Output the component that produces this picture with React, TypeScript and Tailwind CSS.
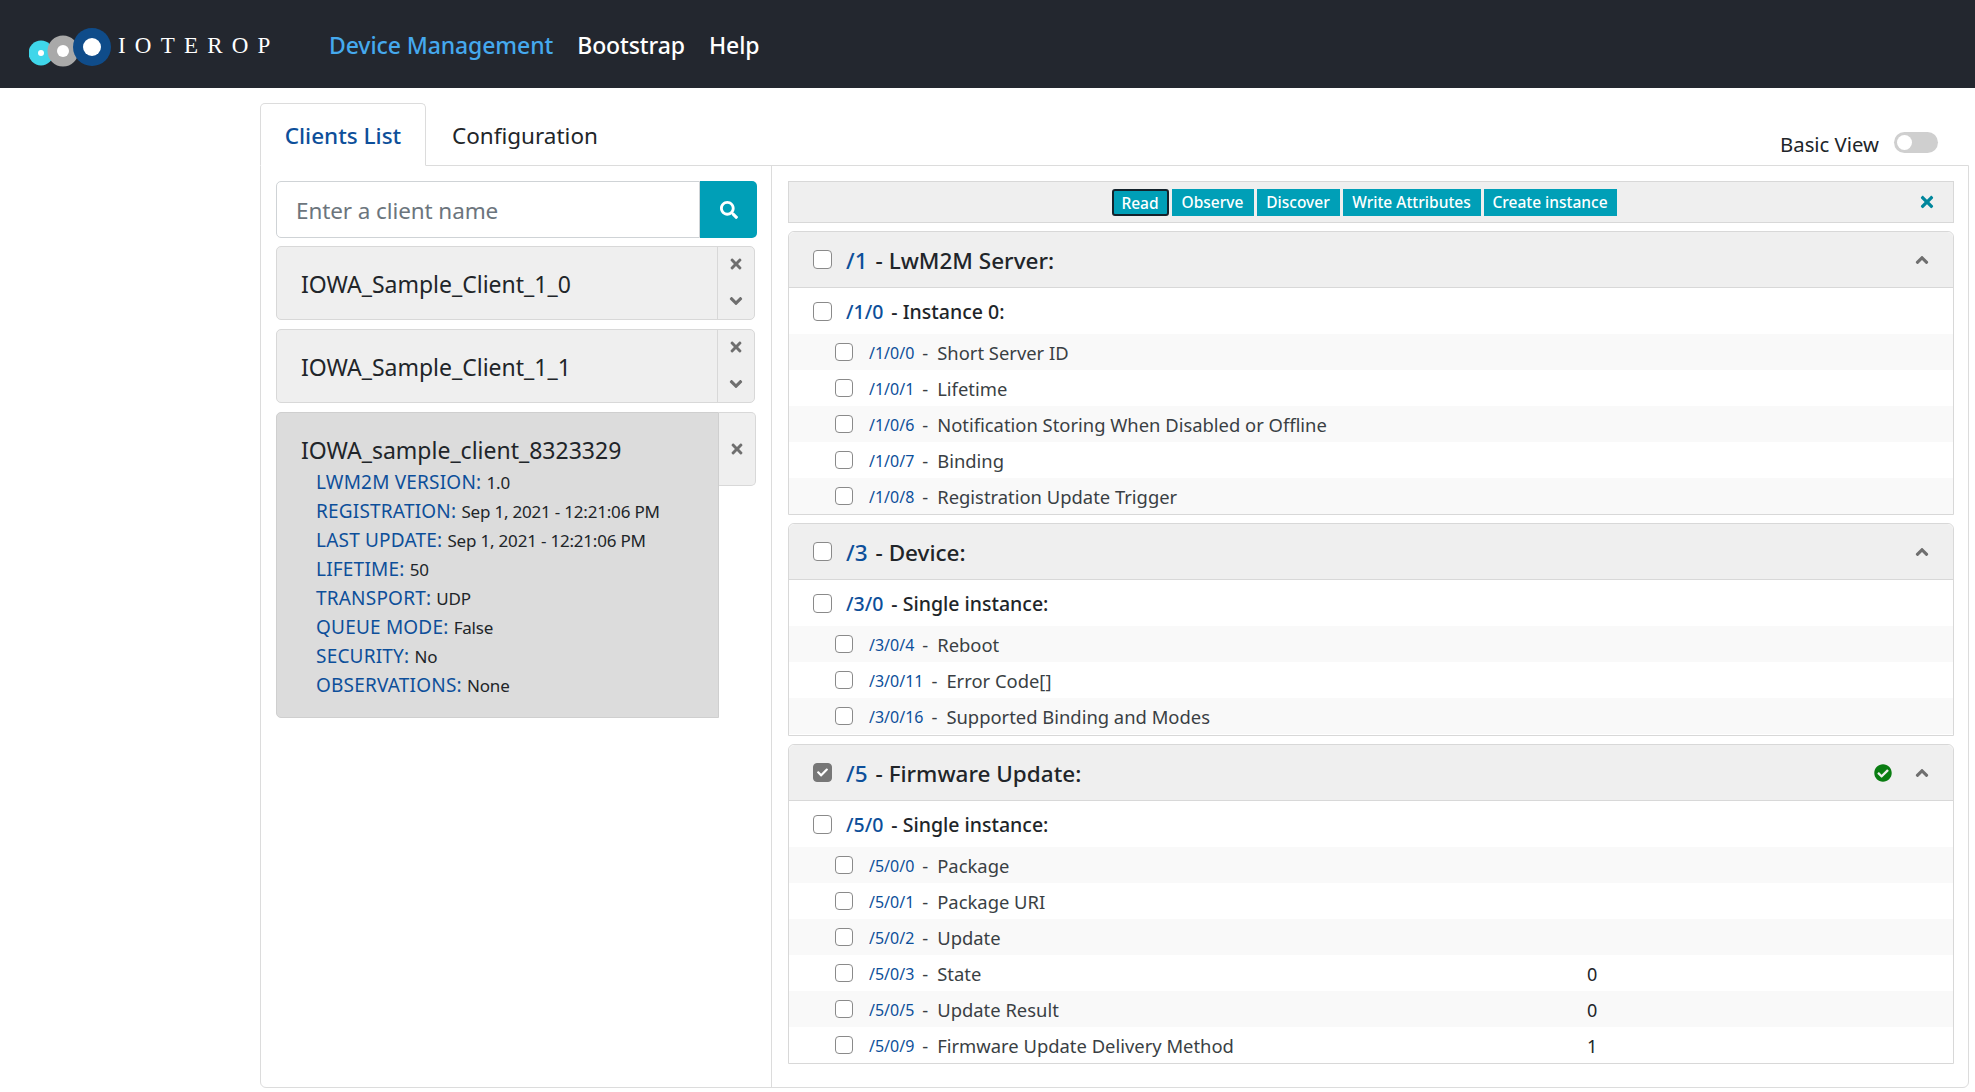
import { FaAngleDown, FaAngleUp, FaCheck, FaCheckCircle, FaSearch, FaTimes } from "react-icons/fa";

type Resource = {
  path: string;
  name: string;
  value?: string;
};

type ObjectPanelProps = {
  path: string;
  name: string;
  instancePath: string;
  instanceName: string;
  resources: Resource[];
  checked?: boolean;
  className?: string;
};

const FONT = { fontFamily: '"Noto Sans", sans-serif' };

const details = [
  ["LWM2M VERSION:", "1.0"],
  ["REGISTRATION:", "Sep 1, 2021 - 12:21:06 PM"],
  ["LAST UPDATE:", "Sep 1, 2021 - 12:21:06 PM"],
  ["LIFETIME:", "50"],
  ["TRANSPORT:", "UDP"],
  ["QUEUE MODE:", "False"],
  ["SECURITY:", "No"],
  ["OBSERVATIONS:", "None"],
];

const actions = [
  { label: "Observe", width: "w-[82px]" },
  { label: "Discover", width: "w-[83px]" },
  { label: "Write Attributes", width: "w-[138px]" },
  { label: "Create instance", width: "w-[133px]" },
];

function Checkbox({ large, checked }: { large?: boolean; checked?: boolean }): JSX.Element {
  return (
    <span
      className={`flex shrink-0 items-center justify-center rounded-[4px] border-[1.5px] ${
        large ? "h-[19px] w-[19px]" : "h-[18px] w-[18px]"
      } ${checked ? "border-[#777777] bg-[#777777]" : "border-[#8a8a8a] bg-white"}`}
    >
      {checked && <FaCheck className="text-[11px] text-white" />}
    </span>
  );
}

function Logo(): JSX.Element {
  return (
    <svg width="90" height="50" viewBox="0 0 90 50" className="mt-[8px] shrink-0">
      <circle cx="12" cy="30" r="12.5" fill="#3fd6ea" />
      <circle cx="12" cy="30" r="3" fill="#ffffff" />
      <circle cx="34" cy="28" r="15.5" fill="#a9a9a9" />
      <circle cx="34" cy="28" r="6" fill="#ffffff" />
      <circle cx="63" cy="24" r="19" fill="#0f4c8a" />
      <circle cx="63" cy="24" r="9" fill="#ffffff" />
    </svg>
  );
}

function ClientCard({ name }: { name: string }): JSX.Element {
  return (
    <div className="flex h-[74px] w-[479px] overflow-hidden rounded-[5px] border border-[#d8d8d8] bg-[#efefef]">
      <div className="flex flex-1 items-center pl-[24px] pt-[2px] text-[23px] text-[#212529]">{name}</div>
      <div className="flex w-[37px] flex-col items-center justify-between border-l border-[#d8d8d8] pt-[9px] pb-[8px] text-[#6f6f6f]">
        <FaTimes className="text-[16px]" />
        <FaAngleDown className="text-[20px]" />
      </div>
    </div>
  );
}

function ObjectPanel({ path, name, instancePath, instanceName, resources, checked, className }: ObjectPanelProps): JSX.Element {
  return (
    <section className={`w-[1166px] rounded-t-[6px] border border-[#d8d8d8] ${className ?? ""}`}>
      <div className="flex h-[56px] items-center rounded-t-[6px] border-b border-[#d8d8d8] bg-[#efefef] pl-[24px] text-[22.5px] font-medium">
        <Checkbox large checked={checked} />
        <span className="ml-[14px] pt-[2px] text-[#0d4f9a]">{path}</span>
        <span className="ml-[8px] pt-[2px] text-[#212529]">- {name}:</span>
        <span className="ml-auto flex items-center text-[#6f6f6f]">
          {checked && <FaCheckCircle className="mr-[20px] text-[18px] text-[#0a7d12]" />}
          <FaAngleUp className="mr-[21px] text-[20px]" />
        </span>
      </div>
      <div className="flex h-[46px] items-center pl-[24px] text-[19.5px] font-medium">
        <Checkbox large />
        <span className="ml-[14px] pt-[2px] text-[#0d4f9a]">{instancePath}</span>
        <span className="ml-[8px] pt-[2px] text-[#212529]">- {instanceName}:</span>
      </div>
      {resources.map((r, i) => (
        <div
          key={r.path}
          className={`flex h-[36px] items-center pl-[46px] ${i % 2 === 0 ? "bg-[#f9f9f9]" : "bg-white"}`}
        >
          <Checkbox />
          <span className="ml-[16px] pt-[2px] text-[16px] text-[#0d4f9a]">{r.path}</span>
          <span className="ml-[8px] pt-[2px] text-[18.4px] text-[#3a3f44]">-</span>
          <span className="ml-[9px] pt-[2px] text-[18.4px] text-[#3a3f44]">{r.name}</span>
          {r.value && (
            <span className="absolute left-[1587px] pt-[2px] text-[18px] text-[#212529]">{r.value}</span>
          )}
        </div>
      ))}
    </section>
  );
}

export default function App(): JSX.Element {
  return (
    <div className="h-[1092px] w-[1975px] overflow-hidden bg-white" style={FONT}>
      <nav className="flex h-[88px] items-center bg-[#23272f] pl-[29px]">
        <Logo />
        <span
          className="ml-[-1px] w-[211px] pt-[5px] text-[23px] tracking-[0.4em] text-white"
          style={{ fontFamily: '"Liberation Serif", serif' }}
        >
          IOTEROP
        </span>
        <div className="flex items-center pt-[2px] text-[23px] font-medium tracking-[-0.1px] text-white">
          <span className="text-[#45a9ee]">Device Management</span>
          <span className="ml-[24px]">Bootstrap</span>
          <span className="ml-[24px]">Help</span>
        </div>
      </nav>

      <main className="ml-[260px] mt-[14px] w-[1709px]">
        <div className="relative flex h-[63px] items-end">
          <div className="relative top-px flex h-[63px] w-[166px] items-center justify-center rounded-t-[5px] border border-b-white border-[#dcdcdc] bg-white pt-[2px] text-[22.5px] font-medium text-[#0d4f9a]">
            Clients List
          </div>
          <div className="flex h-[62px] items-center pl-[26px] pt-[4px] text-[22.5px] text-[#212529]">Configuration</div>
          <div className="mb-[6px] ml-auto flex items-center pr-[31px]">
            <span className="pt-[2px] text-[20.3px] text-[#212529]">Basic View</span>
            <span className="ml-[15px] flex h-[21px] w-[44px] items-center rounded-full bg-[#cfcfcf] pl-[3px]">
              <span className="h-[15px] w-[15px] rounded-full bg-white" />
            </span>
          </div>
        </div>

        <div className="flex h-[923px] rounded-b-[6px] border border-[#dcdcdc]">
          <div className="w-[511px] border-r border-[#dcdcdc] pl-[15px] pt-[15px]">
            <div className="flex h-[57px] w-[481px]">
              <div className="flex flex-1 items-center rounded-l-[5px] border border-[#cfd3d6] pl-[19px] pt-[3px] text-[22.5px] tracking-[-0.1px] text-[#6c757d]">
                Enter a client name
              </div>
              <button type="button" className="flex w-[57px] items-center justify-center rounded-r-[5px] bg-[#009fb7] text-[18px] text-white">
                <FaSearch />
              </button>
            </div>

            <div className="mt-[8px] flex flex-col gap-[9px]">
              <ClientCard name="IOWA_Sample_Client_1_0" />
              <ClientCard name="IOWA_Sample_Client_1_1" />
              <div className="flex w-[480px] items-start">
                <div className="h-[306px] w-[443px] rounded-l-[5px] border border-[#cfcfcf] bg-[#dcdcdc] pl-[24px] pt-[20px]">
                  <div className="text-[23px] leading-[35px] text-[#212529]">IOWA_sample_client_8323329</div>
                  {details.map(([label, value]) => (
                    <div key={label} className="ml-[15px] h-[29px] text-[19px] leading-[29px] tracking-[0.2px]">
                      <span className="text-[#0d4f9a]">{label}</span>{" "}
                      <span className="text-[17px] tracking-[-0.2px] text-[#212529]">{value}</span>
                    </div>
                  ))}
                </div>
                <div className="flex h-[74px] flex-1 items-center justify-center rounded-r-[5px] border border-l-0 border-[#d8d8d8] bg-[#efefef] text-[#6f6f6f]">
                  <FaTimes className="text-[16px]" />
                </div>
              </div>
            </div>
          </div>

          <div className="flex flex-col gap-[8px] pl-[16px] pt-[15px]">
            <div className="relative flex h-[42px] w-[1166px] items-center justify-center border border-[#d8d8d8] bg-[#efefef] pr-[14px]">
              <div className="flex items-center gap-[3px] text-[15.5px] font-medium text-white">
                <button type="button" className="h-[27px] w-[57px] rounded-[3px] border-2 border-[#14222b] bg-[#009fb7] pt-[1px]">Read</button>
                {actions.map((a) => (
                  <button key={a.label} type="button" className={`h-[27px] bg-[#009fb7] pt-[1px] ${a.width}`}>{a.label}</button>
                ))}
              </div>
              <FaTimes className="absolute right-[17px] text-[18px] text-[#00869c]" />
            </div>

            <ObjectPanel
              path="/1"
              name="LwM2M Server"
              instancePath="/1/0"
              instanceName="Instance 0"
              resources={[
                { path: "/1/0/0", name: "Short Server ID" },
                { path: "/1/0/1", name: "Lifetime" },
                { path: "/1/0/6", name: "Notification Storing When Disabled or Offline" },
                { path: "/1/0/7", name: "Binding" },
                { path: "/1/0/8", name: "Registration Update Trigger" },
              ]}
            />
            <ObjectPanel
              className="pb-[1px]"
              path="/3"
              name="Device"
              instancePath="/3/0"
              instanceName="Single instance"
              resources={[
                { path: "/3/0/4", name: "Reboot" },
                { path: "/3/0/11", name: "Error Code[]" },
                { path: "/3/0/16", name: "Supported Binding and Modes" },
              ]}
            />
            <ObjectPanel
              checked
              path="/5"
              name="Firmware Update"
              instancePath="/5/0"
              instanceName="Single instance"
              resources={[
                { path: "/5/0/0", name: "Package" },
                { path: "/5/0/1", name: "Package URI" },
                { path: "/5/0/2", name: "Update" },
                { path: "/5/0/3", name: "State", value: "0" },
                { path: "/5/0/5", name: "Update Result", value: "0" },
                { path: "/5/0/9", name: "Firmware Update Delivery Method", value: "1" },
              ]}
            />
          </div>
        </div>
      </main>
    </div>
  );
}
